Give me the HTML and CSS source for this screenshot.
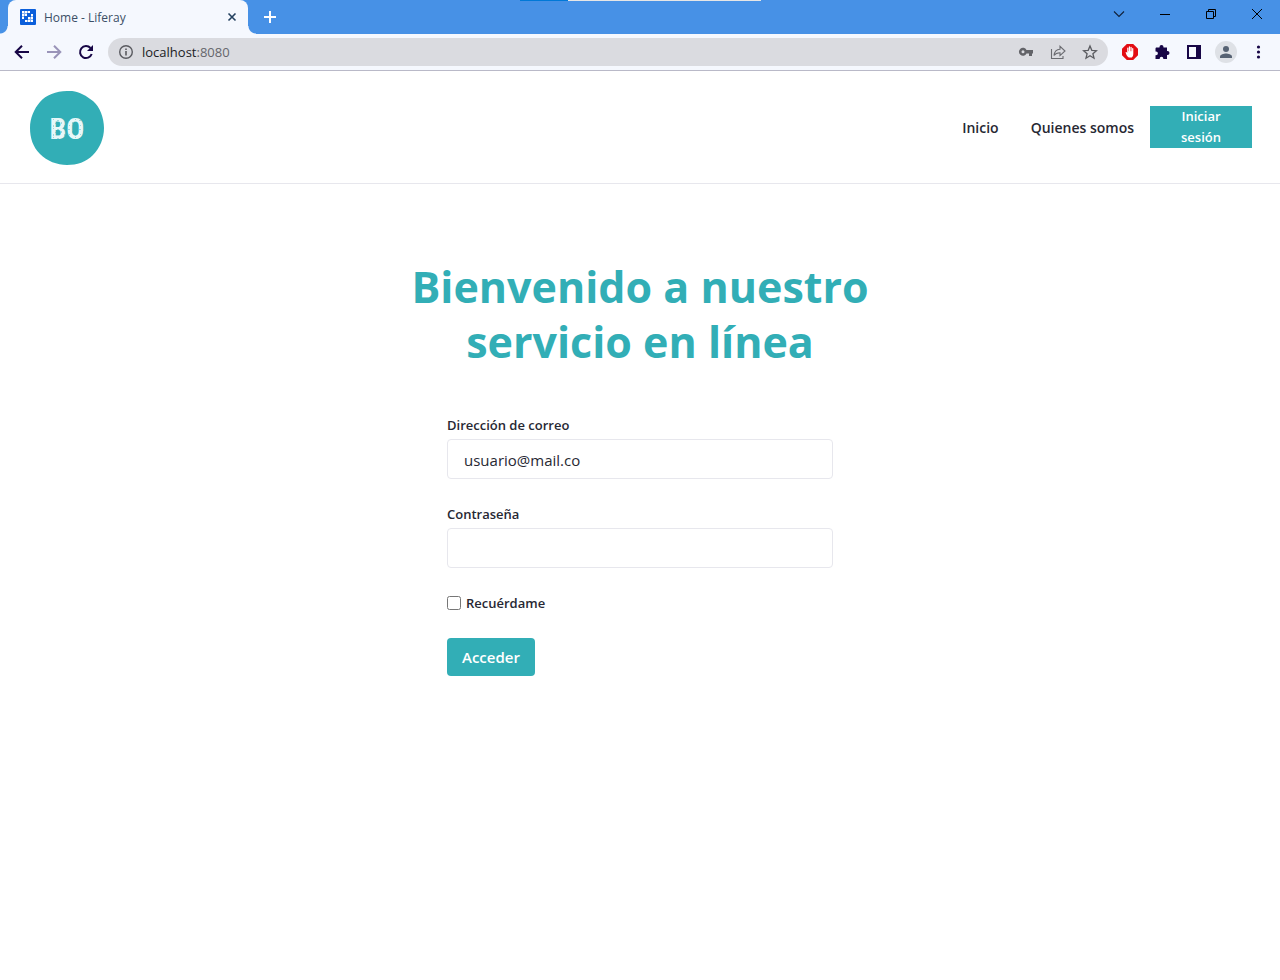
FILE: index.html
```html
<!DOCTYPE html>
<html lang="es">
<head>
<meta charset="utf-8">
<meta name="viewport" content="width=device-width, initial-scale=1">
<title>Home - Liferay</title>
<link rel="stylesheet" href="styles.css">
</head>
<body>
<div class="browser">
  <div class="tabstrip">
    <div class="progress"></div>
    <div class="tab">
      <svg class="favicon" width="16" height="16" viewBox="0 0 16 16" aria-hidden="true">
        <rect width="16" height="16" rx="1" fill="#0b5fdb"/>
        <g fill="#fff">
          <path d="M2 2h2v2H2zM5 2h2v2H5zM8 2h2v2H8zM2 5h2v2H2zM5 5h2v2H5zM11 5h2v2h-2zM2 8h2v2H2zM8 8h2v2H8zM11 8h2v2h-2zM5 11h2v2H5zM8 11h2v2H8zM11 11h2v2h-2z"/>
          <path opacity=".5" d="M4 2h1v5H4zM7 2h1v2H7zM2 4h5v1H2zM2 7h2v1H2zM10 8h1v5h-1zM7 11h1v2H7zM8 10h5v1H8zM11 7h2v1h-2z"/>
        </g>
      </svg>
      <span class="tab-title">Home - Liferay</span>
      <button class="icon-button tab-close" type="button" aria-label="Cerrar pestaña">
        <svg width="16" height="16" viewBox="0 0 16 16"><path d="M4.500 4.500l7 7m0-7l-7 7" fill="none" stroke="#24415f" stroke-width="1.600"/></svg>
      </button>
    </div>
    <button class="icon-button new-tab" type="button" aria-label="Nueva pestaña">
      <svg width="16" height="16" viewBox="0 0 16 16"><path d="M8 2v12M2 8h12" fill="none" stroke="#fff" stroke-width="2"/></svg>
    </button>
    <div class="window-controls">
      <button class="icon-button window-button" type="button" aria-label="Buscar pestañas">
        <svg width="12" height="12" viewBox="0 0 12 12"><path d="M1 3.500l5 5 5-5" fill="none" stroke="#102038" stroke-width="1.100"/></svg>
      </button>
      <button class="icon-button window-button" type="button" aria-label="Minimizar">
        <svg width="12" height="12" viewBox="0 0 12 12"><path d="M1 6h10v1H1z" fill="#000"/></svg>
      </button>
      <button class="icon-button window-button" type="button" aria-label="Restaurar">
        <svg width="12" height="12" viewBox="0 0 12 12"><path d="M1.500 3.500h7v7h-7zM3.500 3.500v-2h7v7h-2" fill="none" stroke="#000"/></svg>
      </button>
      <button class="icon-button window-button" type="button" aria-label="Cerrar">
        <svg width="12" height="12" viewBox="0 0 12 12"><path d="M1 1l10 10m0-10L1 11" fill="none" stroke="#000" stroke-width="1"/></svg>
      </button>
    </div>
  </div>

  <div class="toolbar">
    <button class="icon-button tool" type="button" aria-label="Atrás">
      <svg width="16" height="16" viewBox="0 0 16 16"><path d="M15 8H2.500M8 1.700L1.700 8 8 14.300" fill="none" stroke="#170646" stroke-width="2"/></svg>
    </button>
    <button class="icon-button tool" type="button" aria-label="Adelante">
      <svg width="16" height="16" viewBox="0 0 16 16"><path d="M1 8h12.500M8 1.700L14.300 8 8 14.300" fill="none" stroke="#9a94b9" stroke-width="2"/></svg>
    </button>
    <button class="icon-button tool" type="button" aria-label="Recargar">
      <svg width="16" height="16" viewBox="0 0 16 16"><path d="M13.700 10A6 6 0 1 1 12.500 4" fill="none" stroke="#170646" stroke-width="2"/><path d="M15 1v6H9z" fill="#170646"/></svg>
    </button>
    <div class="omnibox">
      <svg width="16" height="16" viewBox="0 0 16 16" aria-hidden="true"><circle cx="8" cy="8" r="6.300" fill="none" stroke="#5a5b60" stroke-width="1.400"/><path d="M7.200 7h1.600v4.500H7.200zM7.200 4.400h1.600V6H7.200z" fill="#5a5b60"/></svg>
      <span class="address">localhost<span class="port">:8080</span></span>
      <button class="icon-button tool" type="button" aria-label="Contraseñas">
        <svg width="16" height="16" viewBox="0 0 16 16"><path fill-rule="evenodd" d="M8.500 6A4 4 0 1 0 8.500 9.500H11V12h3V9.500h1V6zM5 6.300a1.500 1.500 0 1 1 0 3 1.500 1.500 0 0 1 0-3z" fill="#626368"/></svg>
      </button>
      <button class="icon-button tool" type="button" aria-label="Compartir">
        <svg width="16" height="16" viewBox="0 0 16 16"><path d="M1.500 5v9.500h11.500V12M4 11.500C4.500 7.500 6.500 5.500 10 5.300V2.300L15 7l-5 4.600V8.700C7 8.700 5.200 9.600 4 11.500z" fill="none" stroke="#6a6b70" stroke-width="1.100"/></svg>
      </button>
      <button class="icon-button tool" type="button" aria-label="Añadir a marcadores">
        <svg width="16" height="16" viewBox="0 0 16 16"><path d="M8 2l1.800 4.300 4.600.4-3.500 3 1.100 4.500-4-2.400-4 2.400 1.100-4.500-3.500-3 4.600-.4z" fill="none" stroke="#5a5b60" stroke-width="1.300"/></svg>
      </button>
    </div>
    <button class="icon-button tool" type="button" aria-label="AdBlock">
      <svg width="16" height="16" viewBox="0 0 16 16"><path d="M4.800 0h6.400L16 4.800v6.400L11.200 16H4.800L0 11.200V4.800z" fill="#e30d13"/><path d="M6.800 13.500C5 12.500 4 10 3.600 8.200c.6-.6 1.200 0 1.600.8V4.200c0-.8 1.200-.8 1.200 0v3h.4V3c0-.9 1.300-.9 1.300 0v4.200h.4V3.300c0-.9 1.200-.9 1.200 0v4h.4V4.500c0-.8 1.200-.8 1.200 0v5c0 2-.5 3-1.500 4z" fill="#fff"/></svg>
    </button>
    <button class="icon-button tool" type="button" aria-label="Extensiones">
      <svg width="16" height="16" viewBox="0 0 16 16"><path d="M2 3.500h3.500V3a2 2 0 0 1 4 0v.5H13V7h.5a2 2 0 0 1 0 4H13v4H9.300v-.5a1.800 1.800 0 0 0-3.600 0v.5H1.500v-3.800H2a1.900 1.900 0 0 0 0-3.800H1.500v-2.900z" fill="#170646"/></svg>
    </button>
    <button class="icon-button tool" type="button" aria-label="Panel lateral">
      <svg width="16" height="16" viewBox="0 0 16 16"><path fill-rule="evenodd" d="M1 1h14v14H1zM3 3v10h7V3z" fill="#170646"/></svg>
    </button>
    <button class="icon-button tool" type="button" aria-label="Perfil">
      <svg width="22" height="22" viewBox="0 0 22 22"><circle cx="11" cy="11" r="11" fill="#dee1e6"/><circle cx="11" cy="8" r="3" fill="#566273"/><path d="M5 17v-1.500c0-2 4-3 6-3s6 1 6 3V17z" fill="#566273"/></svg>
    </button>
    <button class="icon-button tool" type="button" aria-label="Menú">
      <svg width="16" height="16" viewBox="0 0 16 16"><g fill="#170646"><circle cx="8.500" cy="3" r="1.600"/><circle cx="8.500" cy="8" r="1.600"/><circle cx="8.500" cy="13" r="1.600"/></g></svg>
    </button>
  </div>
</div>

<header class="site-header">
  <a class="logo" href="#" aria-label="BO">
    <svg width="74" height="74" viewBox="0 0 74 74">
      <defs>
        <pattern id="worn" width="11" height="9" patternUnits="userSpaceOnUse">
          <path d="M1 1h1v1H1zM5 2h2v1H5zM9 4h1v2H9zM3 5h1v1H3zM6 7h1v1H6zM1 7h1v2H1z" fill="#32aeb6" opacity=".4"/>
        </pattern>
      </defs>
      <path d="M37 0C47-1 55 4 63 10c7 6 11 17 11 27s-4 20-11 27-16 10-26 10-20-4-27-11S0 47 0 37 4 18 10 11 26 0 37 0z" fill="#32aeb6"/>
      <text class="logo-text" x="37" y="48" text-anchor="middle">BO</text>
      <rect x="17" y="19" width="40" height="36" fill="url(#worn)"/>
    </svg>
  </a>
  <nav class="site-nav">
    <a class="nav-link" href="#">Inicio</a>
    <a class="nav-link" href="#">Quienes somos</a>
    <a class="sign-in" href="#">Iniciar sesión</a>
  </nav>
</header>

<main class="content">
  <h1 class="title">Bienvenido a nuestro servicio en línea</h1>
  <form class="login">
    <div class="field">
      <label class="label" for="email">Dirección de correo</label>
      <input class="input" id="email" type="text" value="usuario@mail.co">
    </div>
    <div class="field">
      <label class="label" for="password">Contraseña</label>
      <input class="input" id="password" type="password">
    </div>
    <div class="remember">
      <input class="checkbox" id="remember" type="checkbox">
      <label class="label" for="remember">Recuérdame</label>
    </div>
    <button class="submit" type="submit">Acceder</button>
  </form>
</main>
</body>
</html>
```
FILE: styles.css
```css
* {
  box-sizing: border-box;
}

body {
  margin: 0;
  background: #fff;
  color: #272833;
  font-family: "Open Sans", "Noto Sans", sans-serif;
  font-size: 16px;
}

a {
  color: inherit;
  text-decoration: none;
}

svg {
  display: block;
  flex: none;
}

.icon-button {
  display: flex;
  align-items: center;
  justify-content: center;
  padding: 0;
  border: 0;
  background: none;
}

/* Browser window */
.browser {
  border-bottom: 1px solid #b9b9c8;
  background: #f5f8fe;
}

.tabstrip {
  position: relative;
  display: flex;
  height: 34px;
  padding-left: 8px;
  background: #4791e6;
}

.progress {
  position: absolute;
  top: 0;
  left: 520px;
  width: 241px;
  height: 1px;
  background: linear-gradient(to right, #0078d7 48px, #e6e6e6 48px);
}

.tab {
  position: relative;
  display: flex;
  align-items: center;
  gap: 8px;
  width: 240px;
  padding: 0 8px 0 12px;
  border-radius: 8px 8px 0 0;
  background: #f5f8fe;
}

.tab::before,
.tab::after {
  content: "";
  position: absolute;
  bottom: 0;
  width: 8px;
  height: 8px;
}

.tab::before {
  right: 100%;
  background: radial-gradient(circle at 0 0, #4791e6 7px, #f5f8fe 8px);
}

.tab::after {
  left: 100%;
  background: radial-gradient(circle at 100% 0, #4791e6 7px, #f5f8fe 8px);
}

.tab-title {
  flex: 1;
  color: #3b4f66;
  font-size: 12px;
}

.new-tab {
  width: 44px;
}

.window-controls {
  display: flex;
  height: 28px;
  margin-left: auto;
}

.window-button {
  width: 46px;
}

.toolbar {
  display: flex;
  align-items: center;
  height: 36px;
  padding: 0 6px;
}

.tool {
  width: 32px;
  height: 28px;
}

.omnibox {
  display: flex;
  flex: 1;
  align-items: center;
  height: 28px;
  margin: 0 6px;
  padding: 0 2px 0 10px;
  border-radius: 14px;
  background: #dadbe0;
}

.address {
  flex: 1;
  padding-left: 8px;
  color: #202124;
  font-size: 13px;
}

.port {
  color: #65666b;
}

/* Site header */
.site-header {
  display: flex;
  align-items: center;
  justify-content: space-between;
  padding: 20px 28px 18px 30px;
  border-bottom: 1px solid #e7e7ed;
}

.logo-text {
  fill: #e8f7f8;
  font-family: "Roboto Condensed", "Open Sans Condensed", Roboto, sans-serif;
  font-size: 30px;
  font-weight: 700;
}

.site-nav {
  display: flex;
  align-items: center;
  padding-bottom: 2px;
}

.nav-link {
  padding: 0 16px;
  font-size: 14px;
  font-weight: 600;
}

.sign-in {
  width: 102px;
  padding: 0 24px;
  background: #32aeb6;
  color: #fff;
  font-size: 13px;
  font-weight: 600;
  line-height: 21px;
  text-align: center;
}

/* Login page */
.content {
  display: flex;
  flex-direction: column;
  align-items: center;
  padding: 75px 24px 40px;
}

.title {
  max-width: 500px;
  margin: 0 0 46px;
  color: #32aeb6;
  font-size: 43px;
  font-weight: 700;
  line-height: 55px;
  text-align: center;
}

.login {
  display: flex;
  flex-direction: column;
  align-items: flex-start;
  gap: 25px;
  width: 100%;
  max-width: 386px;
}

.field {
  display: flex;
  flex-direction: column;
  gap: 4px;
  width: 100%;
}

.label {
  font-size: 13px;
  font-weight: 600;
  line-height: 20px;
}

.input {
  width: 100%;
  height: 40px;
  padding: 2px 16px 0;
  border: 1px solid #e7e7ed;
  border-radius: 4px;
  background: #fff;
  color: #272833;
  font-family: inherit;
  font-size: 15px;
}

.remember {
  display: flex;
  align-items: center;
  gap: 5px;
}

.checkbox {
  width: 14px;
  height: 14px;
  margin: 0;
}

.submit {
  height: 38px;
  padding: 0 15px;
  border: 0;
  border-radius: 4px;
  background: #32aeb6;
  color: #fff;
  font-family: inherit;
  font-size: 15px;
  font-weight: 600;
}
```
